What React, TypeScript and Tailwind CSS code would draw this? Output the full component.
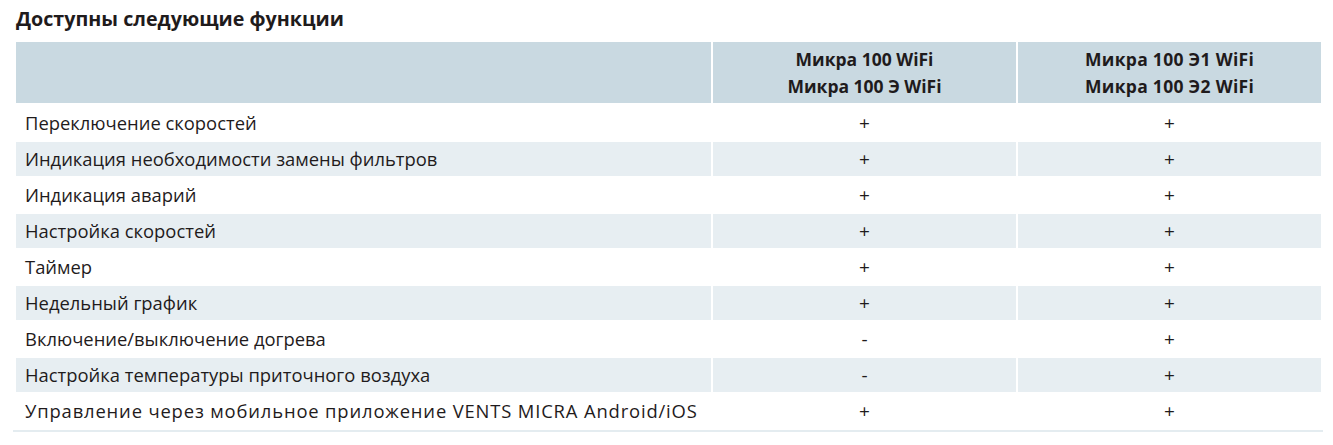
import React from "react";

const rows: [string, string, string][] = [
  ["Переключение скоростей", "+", "+"],
  ["Индикация необходимости замены фильтров", "+", "+"],
  ["Индикация аварий", "+", "+"],
  ["Настройка скоростей", "+", "+"],
  ["Таймер", "+", "+"],
  ["Недельный график", "+", "+"],
  ["Включение/выключение догрева", "-", "+"],
  ["Настройка температуры приточного воздуха", "-", "+"],
  ["Управление через мобильное приложение VENTS MICRA Android/iOS", "+", "+"],
];

export default function App() {
  return (
    <div
      className="w-[1333px] h-[445px] bg-white text-[#1f1b1c] pl-[16px] pt-[5px]"
      style={{ fontFamily: '"Open Sans", "Noto Sans", sans-serif' }}
    >
      <h2 className="text-[19.7px] leading-[28px] font-bold">Доступны следующие функции</h2>
      <div className="mt-[9px] w-[1305px] flex flex-col gap-y-[2px]">
        <div className="grid grid-cols-[695px_303px_303px] gap-x-[2px] h-[61px] mb-[1px]">
          <div className="bg-[#c9d9e1]" />
          <div className="bg-[#c9d9e1] flex flex-col items-center justify-center text-[17.5px] leading-[27px] font-bold">
            <span>Микра 100 WiFi</span>
            <span>Микра 100 Э WiFi</span>
          </div>
          <div className="bg-[#c9d9e1] flex flex-col items-center justify-center text-[17.5px] leading-[27px] font-bold tracking-[0.3px]">
            <span>Микра 100 Э1 WiFi</span>
            <span>Микра 100 Э2 WiFi</span>
          </div>
        </div>
        {rows.map((r, i) => {
          const bg = i % 2 === 1 ? "bg-[#e7eef2]" : "bg-white";
          const last = i === rows.length - 1;
          return (
            <div key={i} className="grid grid-cols-[695px_303px_303px] gap-x-[2px] h-[34px] text-[18.4px]">
              <div className={`${bg} flex items-center pl-[9px] ${last ? "tracking-[0.85px]" : ""}`}>{r[0]}</div>
              <div className={`${bg} flex items-center justify-center text-[19px]`}>{r[1]}</div>
              <div className={`${bg} flex items-center justify-center text-[19px]`}>{r[2]}</div>
            </div>
          );
        })}
        <div className="-ml-[3px] w-[1310px] h-[2px] bg-[#e4ecf0]" />
      </div>
    </div>
  );
}
